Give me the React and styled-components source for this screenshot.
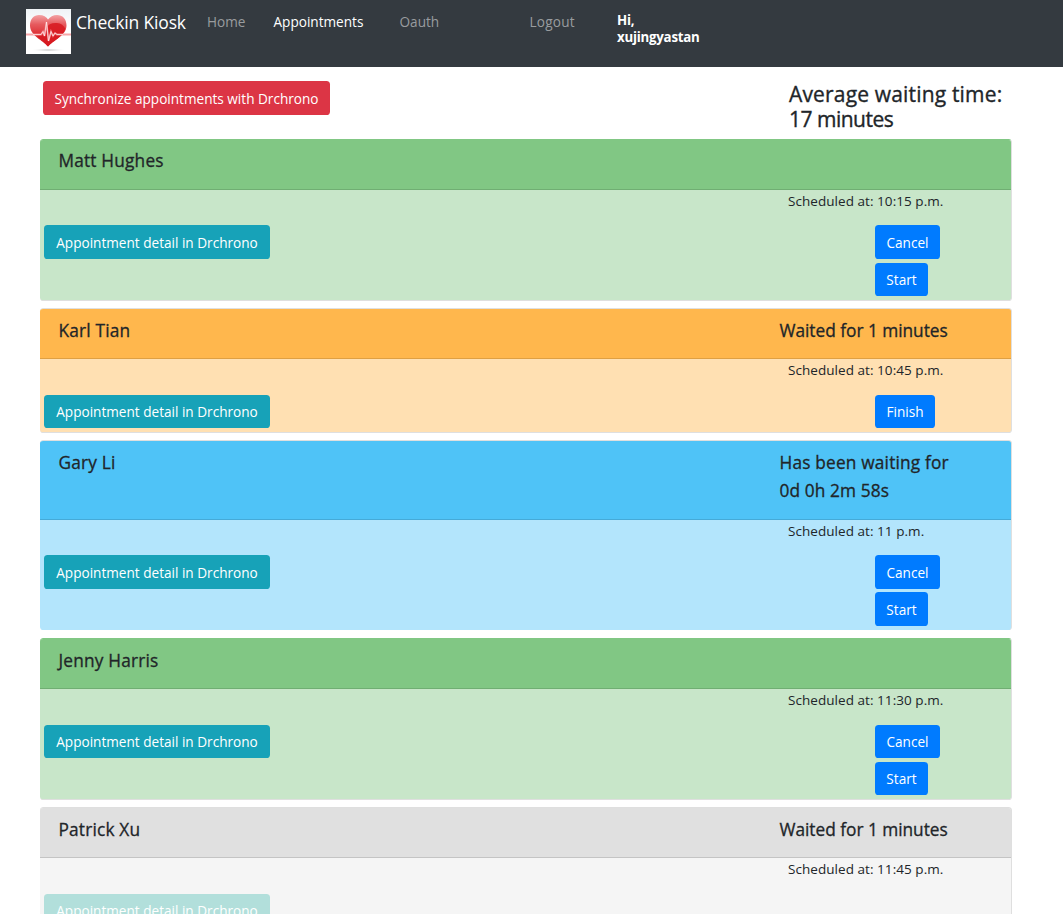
import React from "react";
import styled, { createGlobalStyle } from "styled-components";

const GlobalStyle = createGlobalStyle`
  *, *::before, *::after { box-sizing: border-box; }
  html, body { margin: 0; padding: 0; }
  html { overflow: hidden; }
  body {
    height: 914px;
    overflow: hidden;
    background: #fff;
    color: #212529;
    font-family: "Open Sans", "Noto Sans", sans-serif;
    font-size: 14px;
    line-height: 21.6px;
  }
  h4, h5, p { margin: 0; }
`;

const Navbar = styled.nav`
  display: flex;
  align-items: flex-start;
  height: 67px;
  padding: 9px 26px 0;
  background: #343a40;
  white-space: nowrap;
`;

const Logo = styled.svg`
  display: block;
  flex: none;
  width: 45px;
  height: 45px;
`;

const Brand = styled.a`
  flex: none;
  width: 136px;
  padding-left: 5px;
  color: #fff;
  font-size: 17.5px;
  line-height: 27px;
  letter-spacing: -0.17px;
`;

const NavLink = styled.a`
  flex: none;
  width: ${(p) => p.$width}px;
  padding-top: 2.4px;
  color: ${(p) => (p.$active ? "#fff" : "#999c9f")};
  font-size: 13.6px;
  letter-spacing: ${(p) => p.$spacing || 0}px;
`;

const Greeting = styled.div`
  padding-top: 3px;
  color: #fff;
  font-size: 13.3px;
  font-weight: 700;
  line-height: 17px;
  letter-spacing: -0.25px;
`;

const Page = styled.main`
  width: 972px;
  margin-left: 40px;
`;

const Summary = styled.header`
  display: flex;
  justify-content: space-between;
  height: 72.1px;
  padding: 14px 0 0 3px;
`;

const Average = styled.h4`
  width: 223px;
  padding-top: 1px;
  font-size: 21px;
  font-weight: 400;
  line-height: 25px;
  white-space: nowrap;
  -webkit-text-stroke: 0.35px currentColor;
`;

const Line = styled.div`
  letter-spacing: ${(p) => p.$spacing}px;
`;

const buttonColors = {
  danger: "#dc3545",
  info: "#17a2b8",
  muted: "#b2dfdb",
  primary: "#007bff",
};

const Button = styled.button`
  display: flex;
  align-items: center;
  justify-content: center;
  flex: none;
  width: ${(p) => p.$width}px;
  height: 33.5px;
  padding: 1.3px 0 0;
  border: 0;
  border-radius: 3.6px;
  background: ${(p) => buttonColors[p.$kind]};
  color: #fff;
  font: 400 13.6px/21.6px "Open Sans", "Noto Sans", sans-serif;
  white-space: nowrap;
`;

const Card = styled.article`
  margin-bottom: ${(p) => (p.$flush ? 8.4 : 7.1)}px;
  border: 1px solid #dfdfdf;
  border-left: 0;
  border-top-color: ${(p) => p.$top || "#dfdfdf"};
  border-bottom-width: ${(p) => (p.$flush ? 0 : 1)}px;
  border-radius: 3.6px;
  overflow: hidden;
  background: ${(p) => p.$bg};
`;

const CardHeader = styled.div`
  display: flex;
  padding: 7.3px 0 13.1px 18.5px;
  border-bottom: 1px solid rgba(0, 0, 0, 0.125);
  background: ${(p) => p.$bg};
`;

const CardTitle = styled.h5`
  width: ${(p) => p.$width}px;
  font-size: 17.3px;
  font-weight: 400;
  line-height: 28.5px;
  letter-spacing: 0.18px;
  -webkit-text-stroke: 0.3px currentColor;
`;

const Schedule = styled.p`
  height: 35.5px;
  padding: 0.9px 0 0 748px;
  font-size: 13.5px;
  letter-spacing: 0.05px;
`;

const Actions = styled.div`
  display: flex;
  align-items: flex-start;
  padding-left: 4px;
`;

const ActionList = styled.div`
  display: flex;
  flex-direction: column;
  gap: 3.7px;
  margin-left: 605px;
  padding-bottom: 4px;
`;

const actionWidths = { Cancel: 65, Start: 53, Finish: 60 };

const waited = { text: "Waited for 1 minutes", spacing: -0.02 };

const appointments = [
  { name: "Matt Hughes", time: "10:15 p.m.", actions: ["Cancel", "Start"], head: "#81c784", body: "#c8e6c9", top: "#81c784" },
  { name: "Karl Tian", status: [waited], time: "10:45 p.m.", actions: ["Finish"], head: "#ffb74d", body: "#ffe0b2" },
  {
    name: "Gary Li",
    status: [
      { text: "Has been waiting for", spacing: 0.18 },
      { text: "0d 0h 2m 58s", spacing: 0.1 },
    ],
    time: "11 p.m.",
    actions: ["Cancel", "Start"],
    head: "#4fc3f7",
    body: "#b3e5fc",
    flush: true,
  },
  { name: "Jenny Harris", time: "11:30 p.m.", actions: ["Cancel", "Start"], head: "#81c784", body: "#c8e6c9", top: "#81c784" },
  { name: "Patrick Xu", status: [waited], time: "11:45 p.m.", actions: [], head: "#e0e0e0", body: "#f5f5f5", muted: true },
];

function HeartLogo() {
  return (
    <Logo viewBox="0 0 45 45" aria-label="Checkin Kiosk">
      <defs>
        <linearGradient id="back" x1="0" y1="0" x2="0" y2="1">
          <stop offset="0" stopColor="#eff3f6" />
          <stop offset="0.4" stopColor="#fff" />
        </linearGradient>
        <linearGradient id="heart" x1="0" y1="0" x2="0" y2="1">
          <stop offset="0" stopColor="#f3a3a5" />
          <stop offset="0.3" stopColor="#e65a5e" />
          <stop offset="0.6" stopColor="#dd3237" />
          <stop offset="1" stopColor="#d4151b" />
        </linearGradient>
        <radialGradient id="shadow">
          <stop offset="0" stopColor="#bdbdbd" />
          <stop offset="1" stopColor="#fff" stopOpacity="0" />
        </radialGradient>
      </defs>
      <rect width="45" height="45" fill="url(#back)" />
      <ellipse cx="22.5" cy="41" rx="18" ry="1.8" fill="url(#shadow)" />
      <path d="M22 37.5C17 31.5 4 26.500 4 16.500C4 10 8 6 13 6C17.500 6 20.500 8 22 10.500C24 8 27 6 31 6C36.500 6 40.500 10 40.500 16.500C40.500 26.500 27 31.500 22 37.500Z" fill="url(#heart)" />
      <path d="M20 19C22 15.500 26 13.500 31 14C35 14.300 38 16.500 39.500 20C36.500 28 26 32.500 22 37.500C18 32.500 14 30 11 27L19 26Z" fill="#d71920" opacity="0.85" />
      <path d="M0 25.500H15L17 22.500L18.500 27L20.500 13L22.500 32L25 22.500L27 27L29 24L31 25.500H45" fill="none" stroke="#f58f92" strokeWidth="1.800" opacity="0.8" />
      <path d="M7 25.500H15L17 22.500L18.500 27L20.500 13L22.500 32L25 22.500L27 27L29 24L31 25.500H37" fill="none" stroke="#fff" strokeWidth="0.900" opacity="0.7" />
    </Logo>
  );
}

function Appointment({ item }) {
  return (
    <Card $bg={item.body} $top={item.top} $flush={item.flush}>
      <CardHeader $bg={item.head}>
        <CardTitle $width={721}>{item.name}</CardTitle>
        {item.status && (
          <CardTitle $width={200}>
            {item.status.map((line) => (
              <Line key={line.text} $spacing={line.spacing}>{line.text}</Line>
            ))}
          </CardTitle>
        )}
      </CardHeader>
      <Schedule>Scheduled at: {item.time}</Schedule>
      <Actions>
        <Button $kind={item.muted ? "muted" : "info"} $width={226}>
          Appointment detail in Drchrono
        </Button>
        <ActionList>
          {item.actions.map((label) => (
            <Button key={label} $kind="primary" $width={actionWidths[label]}>
              {label}
            </Button>
          ))}
        </ActionList>
      </Actions>
    </Card>
  );
}

export default function App() {
  return (
    <>
      <GlobalStyle />
      <Navbar>
        <HeartLogo />
        <Brand>Checkin Kiosk</Brand>
        <NavLink $width={66.5}>Home</NavLink>
        <NavLink $width={126} $active>Appointments</NavLink>
        <NavLink $width={130}>Oauth</NavLink>
        <NavLink $width={87.5} $spacing={0.2}>Logout</NavLink>
        <Greeting>
          Hi,
          <br />
          xujingyastan
        </Greeting>
      </Navbar>
      <Page>
        <Summary>
          <Button $kind="danger" $width={287}>Synchronize appointments with Drchrono</Button>
          <Average>
            <Line $spacing={0.17}>Average waiting time:</Line>
            <Line $spacing={-0.5}>17 minutes</Line>
          </Average>
        </Summary>
        {appointments.map((item) => (
          <Appointment key={item.name} item={item} />
        ))}
      </Page>
    </>
  );
}
